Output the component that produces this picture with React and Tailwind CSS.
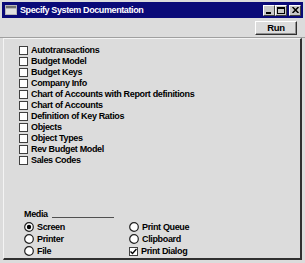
import React from "react";

const docs = [
  "Autotransactions",
  "Budget Model",
  "Budget Keys",
  "Company Info",
  "Chart of Accounts with Report definitions",
  "Chart of Accounts",
  "Definition of Key Ratios",
  "Objects",
  "Object Types",
  "Rev Budget Model",
  "Sales Codes",
];

const Box = ({ checked }) => (
  <span className="w-[9px] h-[9px] bg-white border border-[#404040] flex items-center justify-center shrink-0">
    {checked && (
      <svg width="7" height="7" viewBox="0 0 7 7">
        <path d="M0.5 3.5 L2.5 5.5 L6.5 1" stroke="#000" strokeWidth="1.4" fill="none" />
      </svg>
    )}
  </span>
);

const Radio = ({ checked }) => (
  <svg width="10" height="10" viewBox="0 0 10 10" className="shrink-0">
    <circle cx="5" cy="5" r="4.3" fill="#fff" stroke="#202020" strokeWidth="1.2" />
    {checked && <circle cx="5" cy="5" r="2.2" fill="#000" />}
  </svg>
);

const TitleButton = ({ children }) => (
  <span className="w-[12px] h-[11px] bg-[#c8c8c8] border-t border-l border-white border-r border-b border-r-[#404040] border-b-[#404040] flex items-center justify-center">
    {children}
  </span>
);

export default function App() {
  return (
    <div
      className="w-[305px] h-[263px] bg-[#dcdcdc] flex flex-col text-black font-bold text-[9px] tracking-[-0.35px] leading-none overflow-hidden"
      style={{ fontFamily: '"Liberation Sans", Arial, sans-serif' }}
    >
      {/* title bar */}
      <div className="mx-[2px] mt-[2px] h-[16px] bg-[#0a0a78] flex items-center pl-[3px] pr-[2px] shrink-0">
        <svg width="12" height="10" viewBox="0 0 12 10" className="shrink-0">
          <rect x="0" y="0" width="12" height="10" fill="#b8b8b8" />
          <rect x="1" y="1" width="10" height="2" fill="#707070" />
          <rect x="1" y="4" width="10" height="5" fill="#e0e0e0" />
        </svg>
        <span className="ml-[3px] text-white text-[9px] tracking-[-0.4px]">Specify System Documentation</span>
        <div className="ml-auto flex items-center">
          <TitleButton>
            <span className="w-[5px] h-[2px] bg-black mt-[5px] -ml-[1px]" />
          </TitleButton>
          <TitleButton>
            <span className="w-[8px] h-[7px] border border-black border-t-2" />
          </TitleButton>
          <span className="ml-[2px]">
            <TitleButton>
              <svg width="7" height="6" viewBox="0 0 7 6">
                <path d="M0.5 0 L6.5 6 M6.5 0 L0.5 6" stroke="#000" strokeWidth="1.5" />
              </svg>
            </TitleButton>
          </span>
        </div>
      </div>

      {/* toolbar */}
      <div className="h-[20px] flex items-center justify-end pr-[8px] shrink-0 border-b border-[#a0a0a0]">
        <button className="w-[42px] h-[14px] bg-[#dcdcdc] border border-t-white border-l-white border-r-[#303030] border-b-[#303030] shadow-[inset_-1px_-1px_0_#909090] flex items-center justify-center font-bold text-[9.5px] cursor-default">
          Run
        </button>
      </div>

      {/* content panel */}
      <div className="flex-1 ml-[3px] mr-[3px] mb-[3px] border-l border-t border-[#f4f4f4] border-r-2 border-b-2 border-r-[#303030] border-b-[#303030] flex flex-col">
        <div className="pl-[15px] pt-[6px] flex flex-col">
          {docs.map((d) => (
            <label key={d} className="h-[11px] flex items-center gap-[3px]">
              <Box />
              <span>{d}</span>
            </label>
          ))}
        </div>

        <div className="mt-auto pl-[20px] pb-[1px]">
          <div className="flex items-end h-[11px]">
            <span>Media</span>
            <span className="ml-[4px] w-[62px] border-b border-[#505050] mb-[1px]" />
          </div>
          <div className="grid grid-cols-[105px_1fr] mt-[2px]">
            <div className="flex flex-col">
              <div className="h-[12px] flex items-center gap-[3px]"><Radio checked /><span>Screen</span></div>
              <div className="h-[12px] flex items-center gap-[3px]"><Radio /><span>Printer</span></div>
              <div className="h-[12px] flex items-center gap-[3px]"><Radio /><span>File</span></div>
            </div>
            <div className="flex flex-col">
              <div className="h-[12px] flex items-center gap-[3px]"><Radio /><span>Print Queue</span></div>
              <div className="h-[12px] flex items-center gap-[3px]"><Radio /><span>Clipboard</span></div>
              <div className="h-[12px] flex items-center gap-[3px]"><Box checked /><span>Print Dialog</span></div>
            </div>
          </div>
        </div>
      </div>
    </div>
  );
}
